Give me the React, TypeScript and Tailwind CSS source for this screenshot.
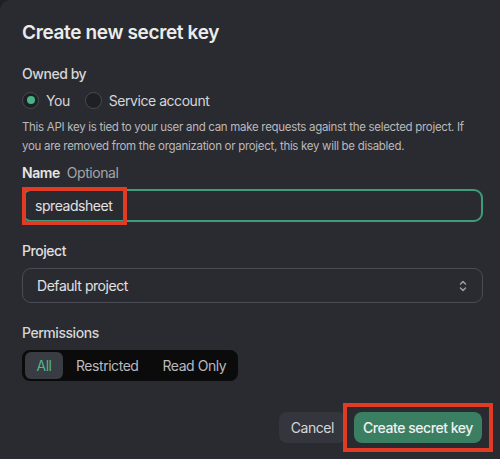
import React from "react";

function Chevrons() {
  return (
    <svg width="10" height="14" viewBox="0 0 10 14" fill="none" stroke="#9a9ba3" strokeWidth="1.5" strokeLinecap="round" strokeLinejoin="round">
      <path d="M2.5 5l2.5-2.5 2.5 2.5" />
      <path d="M2.5 9l2.5 2.5 2.5-2.5" />
    </svg>
  );
}

export default function App() {
  return (
    <div className="w-[500px] h-[459px] bg-[#1f2024] overflow-hidden" style={{ fontFamily: "Inter, 'Noto Sans', sans-serif" }}>
      <div className="w-[500px] h-[459px] bg-[#2a2b30] rounded-tl-[10px] pl-[22px] pr-[17px] pt-[19px] text-[#ececec] tracking-[-0.45px]">
        <h1 className="text-[19px] font-semibold leading-[28px] tracking-[-0.35px]">Create new secret key</h1>

        <div className="mt-[17px] text-[14px] font-medium leading-[20px] text-[#d6d6d6]">Owned by</div>
        <div className="mt-[6px] flex items-center h-[20px] text-[14px]">
          <span className="w-[17px] h-[17px] rounded-full border border-[#4a4b52] bg-[#1f2024] flex items-center justify-center">
            <span className="w-[8px] h-[8px] rounded-full bg-[#46b487]" />
          </span>
          <span className="ml-[7px] text-[#d6d6d6]">You</span>
          <span className="ml-[15px] w-[17px] h-[17px] rounded-full border border-[#4a4b52] bg-[#1f2024]" />
          <span className="ml-[7px] text-[#d6d6d6]">Service account</span>
        </div>
        <p className="mt-[8px] text-[11.5px] leading-[19px] text-[#b9b9bd] tracking-[-0.3px]">
          This API key is tied to your user and can make requests against the selected project. If you are removed from the organization or project, this key will be disabled.
        </p>

        <div className="mt-[7px] flex items-center text-[14px] leading-[20px]">
          <span className="font-semibold text-[#e6e6e6]">Name</span>
          <span className="ml-[7px] text-[#a4a5ab]">Optional</span>
        </div>
        <div className="relative mt-[6px] h-[33px] rounded-[9px] border-2 border-[#3f9b78] flex items-center pl-[11px] text-[14px] text-[#e2e2e2]">
          spreadsheet
          <div className="absolute left-[-2px] top-[-4px] w-[105px] h-[38px] border-[4px] border-[#e23b23]" />
        </div>

        <div className="mt-[19px] text-[14px] font-medium leading-[20px] text-[#e0e0e0]">Project</div>
        <div className="mt-[7px] h-[35px] rounded-[9px] border border-[#4a4b55] flex items-center justify-between pl-[14px] pr-[14px] text-[14px] text-[#e2e2e2]">
          <span>Default project</span>
          <Chevrons />
        </div>

        <div className="mt-[20px] text-[14px] font-medium leading-[20px] text-[#d6d6d6]">Permissions</div>
        <div className="mt-[7px] w-[216px] h-[31px] rounded-[8px] bg-[#0b0b0c] flex items-center px-[3px] text-[14px]">
          <span className="h-[27px] w-[38px] rounded-[6px] bg-[#3a3c43] text-[#4eb78b] flex items-center justify-center">All</span>
          <span className="ml-[13px] text-[#b9b9bf]">Restricted</span>
          <span className="ml-[24px] text-[#b9b9bf]">Read Only</span>
        </div>

        <div className="mt-[31px] flex justify-end items-center">
          <button className="h-[31px] px-[12px] rounded-[8px] bg-[#35363d] text-[14px] text-[#d6d6d6] tracking-[-0.45px]">Cancel</button>
          <div className="relative ml-[8px] mr-[1px]">
            <button className="h-[31px] w-[128px] rounded-[8px] bg-[#3b7f63] text-[14px] font-medium text-[#f0f0f0] tracking-[-0.45px]">Create secret key</button>
            <div className="absolute left-[-11px] top-[-9px] w-[150px] h-[49px] border-[4px] border-[#e23b23]" />
          </div>
        </div>
      </div>
    </div>
  );
}
